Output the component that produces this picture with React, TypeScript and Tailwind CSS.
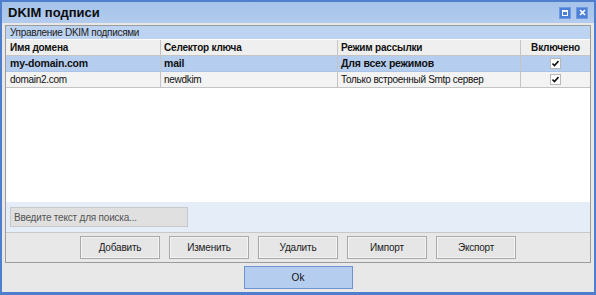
import React from 'react';

const font = { fontFamily: '"Liberation Sans", Arial, sans-serif' };

interface Row {
    domain: string;
    selector: string;
    mode: string;
    enabled: boolean;
    selected?: boolean;
}

const rows: Row[] = [
    { domain: 'my-domain.com', selector: 'mail', mode: 'Для всех режимов', enabled: true, selected: true },
    { domain: 'domain2.com', selector: 'newdkim', mode: 'Только встроенный Smtp сервер', enabled: true },
];

const Check: React.FC = () => (
    <span className="flex h-[11px] w-[11px] items-center justify-center border border-[#b8b8b8] bg-white">
        <svg width="7" height="7" viewBox="0 0 7 7">
            <path d="M0.5 3.5 L2.5 5.5 L6.5 1" stroke="#111" strokeWidth="1.6" fill="none" />
        </svg>
    </span>
);

const ActionButton: React.FC<{ label: string }> = ({ label }) => (
    <button className="h-[23px] w-[80px] border border-[#a9a9a9] bg-[#e6e6e6] text-[10px] tracking-[-0.2px] text-[#222] shadow-[inset_0_0_0_1px_#f4f4f4]">
        {label}
    </button>
);

export default function App() {
    return (
        <div
            style={font}
            className="flex h-[295px] w-[596px] flex-col border-2 border-b-[3px] border-[#4f7fcc] bg-[#e8e8e8] text-[#111]"
        >
            {/* Title bar */}
            <div className="flex h-[21px] shrink-0 items-center justify-between bg-gradient-to-b from-[#a5c2ea] to-[#b3ccee] pl-[6px] pr-[6px]">
                <span className="text-[13px] font-bold text-[#0d0d0d]">DKIM подписи</span>
                <div className="flex gap-[5px]">
                    <span className="flex h-[12px] w-[12px] items-center justify-center border border-[#6f9ae0] bg-[#4c80d8]">
                        <span className="h-[6px] w-[6px] border border-t-2 border-white" />
                    </span>
                    <span className="flex h-[12px] w-[12px] items-center justify-center border border-[#6f9ae0] bg-[#4c80d8]">
                        <svg width="7" height="7" viewBox="0 0 7 7">
                            <path d="M1 1 L6 6 M6 1 L1 6" stroke="#fff" strokeWidth="1.7" />
                        </svg>
                    </span>
                </div>
            </div>

            {/* Panel */}
            <div className="mx-[3px] mt-[2px] flex h-[238px] flex-col border border-[#9c9c9c] bg-[#e8e8e8]">
                <div className="flex flex-1 flex-col border-b border-[#c8c8c8] bg-white">
                    <div className="flex h-[13px] items-center bg-[#bcd3f1] pl-[4px] text-[10px] leading-none tracking-[-0.3px] text-[#222]">
                        Управление DKIM подписями
                    </div>
                    <div className="mt-[1px] grid h-[16px] grid-cols-[155px_177px_183px_1fr] border-b border-[#c4c4c4] bg-[#efefef] text-[10px] font-bold tracking-[-0.2px]">
                        <div className="flex items-center border-r border-[#c4c4c4] pl-[4px]">Имя домена</div>
                        <div className="flex items-center border-r border-[#c4c4c4] pl-[3px]">Селектор ключа</div>
                        <div className="flex items-center border-r border-[#c4c4c4] pl-[3px]">Режим рассылки</div>
                        <div className="flex items-center justify-center">Включено</div>
                    </div>
                    {rows.map((r) => (
                        <div
                            key={r.domain}
                            className={
                                r.selected
                                    ? 'grid h-[16px] grid-cols-[155px_177px_183px_1fr] border-b border-[#a9c2e6] bg-[#b5cdef] text-[10.5px] font-bold tracking-[-0.2px]'
                                    : 'grid h-[16px] grid-cols-[155px_177px_183px_1fr] border-b border-[#c4c4c4] bg-[#f3f3f3] text-[10px] tracking-[-0.3px]'
                            }
                        >
                            <div className="flex items-center border-r border-[#c4c4c4] pl-[4px]">{r.domain}</div>
                            <div className="flex items-center border-r border-[#c4c4c4] pl-[3px]">{r.selector}</div>
                            <div className="flex items-center border-r border-[#c4c4c4] pl-[3px]">{r.mode}</div>
                            <div className="flex items-center justify-center">{r.enabled && <Check />}</div>
                        </div>
                    ))}
                    <div className="flex-1" />
                    <div className="flex h-[30px] items-center bg-[#e5edf8] pl-[4px]">
                        <input
                            placeholder="Введите текст для поиска..."
                            className="h-[20px] w-[178px] border border-[#c9c9c9] bg-[#e0e0e0] px-[3px] text-[10px] tracking-[-0.2px] text-[#222] outline-none placeholder:text-[#555]"
                        />
                    </div>
                </div>
                <div className="flex h-[29px] shrink-0 items-center justify-center gap-[9px]">
                    <ActionButton label="Добавить" />
                    <ActionButton label="Изменить" />
                    <ActionButton label="Удалить" />
                    <ActionButton label="Импорт" />
                    <ActionButton label="Экспорт" />
                </div>
            </div>

            {/* Footer */}
            <div className="flex flex-1 items-center justify-center">
                <button className="h-[23px] w-[109px] border border-[#6f93cc] bg-[#b5cef0] text-[10px] text-[#111]">
                    Ok
                </button>
            </div>
        </div>
    );
}
